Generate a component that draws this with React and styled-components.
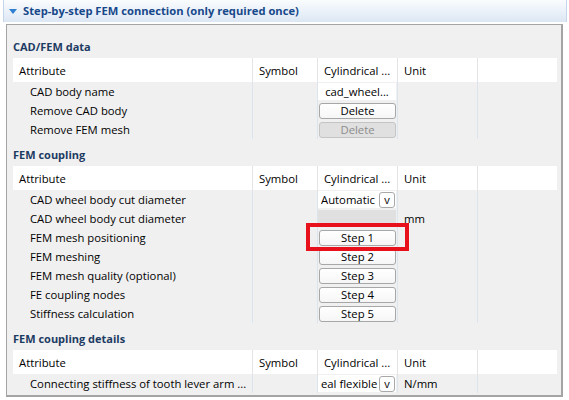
import React from "react";
import styled, { createGlobalStyle } from "styled-components";

const GlobalStyle = createGlobalStyle`
  html, body { margin: 0; padding: 0; background: #ffffff; }
  body {
    font-family: "Open Sans", "Noto Sans", sans-serif;
    font-size: 11.3px;
    color: #000;
  }
  * { box-sizing: border-box; }
`;

const Page = styled.div`
  position: relative;
  width: 569px;
  height: 400px;
  overflow: hidden;
  padding-left: 3px;
`;

const GroupHeader = styled.div`
  width: 564px;
  height: 22px;
  display: flex;
  align-items: center;
  gap: 6px;
  padding-left: 5px;
  background: linear-gradient(#fafcfe, #dce7f4);
  border-left: 1px solid #c6d6ea;
  border-right: 1px solid #c6d6ea;
`;

const Caret = styled.svg`
  width: 8px;
  height: 5px;
  flex: none;
`;

const GroupTitle = styled.span`
  font-size: 11.2px;
  font-weight: 700;
  color: #17488a;
  line-height: 22px;
`;

const Panel = styled.div`
  margin: 2px 0 0 3px;
  width: 557px;
  border: 1px solid #a4a4a4;
  border-right-width: 2px;
  border-bottom-width: 2px;
  background: #f0f0f0;
  padding: 11px 4px 2px 6px;
`;

const SectionTitle = styled.div`
  height: 22px;
  line-height: 22px;
  font-size: 11px;
  font-weight: 700;
  color: #1d3b63;
  margin-top: ${(p) => (p.$first ? "0" : "5px")};
`;

const Row = styled.div`
  display: grid;
  grid-template-columns: 240px 65px 80px 80px 1fr;
  height: ${(p) => (p.$head ? "24px" : "19px")};
  background: ${(p) => (p.$head ? "#ffffff" : "transparent")};
`;

const Cell = styled.div`
  display: flex;
  align-items: center;
  min-width: 0;
  overflow: hidden;
  white-space: nowrap;
  padding-left: ${(p) => p.$pad ?? 6}px;
  border-right: ${(p) =>
    p.$last ? "none" : `1px solid ${p.$head ? "#e4e4e4" : "#dce4ee"}`};
`;

const ValueBox = styled.div`
  flex: 1;
  height: 17px;
  margin-right: 1px;
  display: flex;
  align-items: center;
  justify-content: ${(p) => (p.$center ? "center" : "flex-start")};
  padding-left: ${(p) => (p.$center ? "0" : "3px")};
  background: ${(p) => (p.$disabled ? "#e0e0e0" : "#ffffff")};
  overflow: hidden;
  white-space: nowrap;
`;

const ComboText = styled.span`
  flex: 1;
  min-width: 0;
  overflow: hidden;
  white-space: nowrap;
`;

const ComboButton = styled.span`
  flex: none;
  width: 16px;
  height: 16px;
  margin-right: 1px;
  border: 1px solid #a9a9a9;
  border-radius: 3px;
  background: #fff;
  display: flex;
  align-items: center;
  justify-content: center;
  font-size: 11px;
  line-height: 1;
`;

const Button = styled.div`
  width: 77px;
  height: 16px;
  margin-left: 1px;
  border: 1px solid ${(p) => (p.$disabled ? "#c4c4c4" : "#a7a7a7")};
  border-radius: 3px;
  background: ${(p) =>
    p.$disabled ? "#e0e0e0" : "linear-gradient(#ffffff, #f6f6f6)"};
  color: ${(p) => (p.$disabled ? "#8c8c8c" : "#000")};
  display: flex;
  align-items: center;
  justify-content: center;
  line-height: 1;
`;

const Highlight = styled.div`
  position: absolute;
  left: 306px;
  top: 223px;
  width: 103px;
  height: 28px;
  border: 4px solid #e8101a;
  pointer-events: none;
`;

const HeadRow = () => (
  <Row $head>
    <Cell $head>Attribute</Cell>
    <Cell $head>Symbol</Cell>
    <Cell $head>Cylindrical ...</Cell>
    <Cell $head>Unit</Cell>
    <Cell $head $last />
  </Row>
);

const DataRow = ({ label, value, unit }) => (
  <Row>
    <Cell $pad={17}>{label}</Cell>
    <Cell />
    <Cell $pad={0}>{value}</Cell>
    <Cell>{unit}</Cell>
    <Cell $last />
  </Row>
);

const Combo = ({ text }) => (
  <ValueBox>
    <ComboText>{text}</ComboText>
    <ComboButton>v</ComboButton>
  </ValueBox>
);

const Section = ({ title, first, rows }) => (
  <>
    <SectionTitle $first={first}>{title}</SectionTitle>
    <HeadRow />
    {rows.map((r, i) => (
      <DataRow key={i} {...r} />
    ))}
  </>
);

export default function App() {
  const cadRows = [
    { label: "CAD body name", value: <ValueBox $center>cad_wheel...</ValueBox> },
    { label: "Remove CAD body", value: <Button>Delete</Button> },
    { label: "Remove FEM mesh", value: <Button $disabled>Delete</Button> },
  ];
  const femRows = [
    { label: "CAD wheel body cut diameter", value: <Combo text="Automatic" /> },
    { label: "CAD wheel body cut diameter", value: <ValueBox $disabled />, unit: "mm" },
    { label: "FEM mesh positioning", value: <Button>Step 1</Button> },
    { label: "FEM meshing", value: <Button>Step 2</Button> },
    { label: "FEM mesh quality (optional)", value: <Button>Step 3</Button> },
    { label: "FE coupling nodes", value: <Button>Step 4</Button> },
    { label: "Stiffness calculation", value: <Button>Step 5</Button> },
  ];
  const detailRows = [
    {
      label: "Connecting stiffness of tooth lever arm ...",
      value: <Combo text="eal flexible" />,
      unit: "N/mm",
    },
  ];
  return (
    <Page>
      <GlobalStyle />
      <GroupHeader>
        <Caret viewBox="0 0 8 5">
          <path d="M0 0 L8 0 L4 5 Z" fill="#2f7fd0" />
        </Caret>
        <GroupTitle>Step-by-step FEM connection (only required once)</GroupTitle>
      </GroupHeader>
      <Panel>
        <Section title="CAD/FEM data" first rows={cadRows} />
        <Section title="FEM coupling" rows={femRows} />
        <Section title="FEM coupling details" rows={detailRows} />
      </Panel>
      <Highlight />
    </Page>
  );
}
